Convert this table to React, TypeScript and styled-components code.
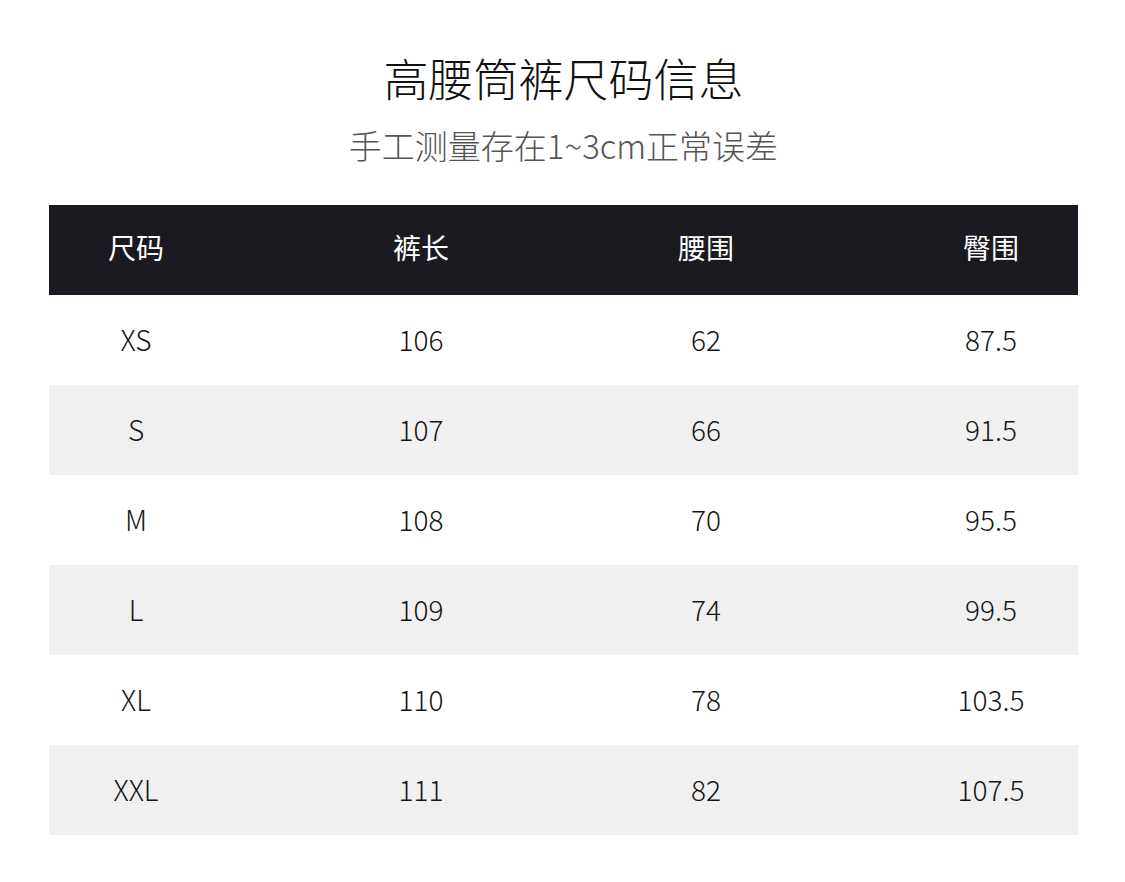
import React from "react";
import styled, { createGlobalStyle } from "styled-components";

const Global = createGlobalStyle`
  html, body { margin: 0; padding: 0; background: #ffffff; }
  body { font-family: "Noto Sans CJK SC", "Noto Sans", sans-serif; }
`;

const Page = styled.div`
  width: 1125px;
  height: 882px;
  box-sizing: border-box;
  padding: 48px 47px 0 49px;
  display: flex;
  flex-direction: column;
  align-items: stretch;
`;

const Title = styled.h1`
  margin: 0;
  text-align: center;
  font-size: 45px;
  font-weight: 300;
  line-height: 60px;
  color: #111;
`;

const Subtitle = styled.p`
  margin: 17px 0 0;
  text-align: center;
  font-size: 33px;
  font-weight: 300;
  line-height: 40px;
  color: #555;
`;

const Table = styled.div`
  margin-top: 40px;
  display: flex;
  flex-direction: column;
`;

const Row = styled.div<{ $variant: "head" | "light" | "shade" }>`
  height: 90px;
  box-sizing: border-box;
  display: flex;
  align-items: center;
  justify-content: space-between;
  padding: ${(p) => (p.$variant === "head" ? "0 27px 6px" : "0 27px 3px")};
  background: ${(p) =>
    p.$variant === "head" ? "#1a1a20" : p.$variant === "shade" ? "#f0f0f0" : "#ffffff"};
  color: ${(p) => (p.$variant === "head" ? "#ffffff" : "#151515")};
  font-weight: ${(p) => (p.$variant === "head" ? 400 : 300)};
`;

const Cell = styled.div`
  width: 120px;
  text-align: center;
  font-size: 28px;
  line-height: 36px;
`;

const headers = ["尺码", "裤长", "腰围", "臀围"];
const rows = [
  ["XS", "106", "62", "87.5"],
  ["S", "107", "66", "91.5"],
  ["M", "108", "70", "95.5"],
  ["L", "109", "74", "99.5"],
  ["XL", "110", "78", "103.5"],
  ["XXL", "111", "82", "107.5"],
];

export default function App() {
  return (
    <>
      <Global />
      <Page>
        <Title>高腰筒裤尺码信息</Title>
        <Subtitle>手工测量存在1~3cm正常误差</Subtitle>
        <Table>
          <Row $variant="head">
            {headers.map((h) => (
              <Cell key={h}>{h}</Cell>
            ))}
          </Row>
          {rows.map((r, i) => (
            <Row key={r[0]} $variant={i % 2 === 1 ? "shade" : "light"}>
              {r.map((c, j) => (
                <Cell key={j}>{c}</Cell>
              ))}
            </Row>
          ))}
        </Table>
      </Page>
    </>
  );
}
